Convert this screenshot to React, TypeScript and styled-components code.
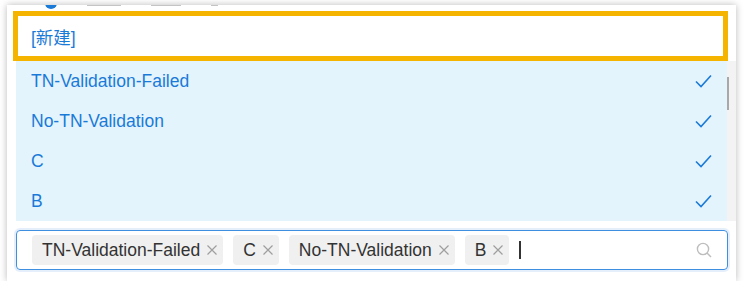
import React from 'react';
import styled, { createGlobalStyle } from 'styled-components';

const GlobalStyle = createGlobalStyle`
  html, body {
    margin: 0;
    padding: 0;
    background: #ffffff;
    font-family: "Liberation Sans", Arial, "Noto Sans CJK SC", sans-serif;
  }
`;

const Panel = styled.div`
  position: relative;
  margin: 5px 8px 0 7px;
  height: 276px;
  background: #fff;
  box-shadow: 0 0 7px rgba(0, 0, 0, 0.28);
  display: flex;
  flex-direction: column;
`;

const ClippedRow = styled.div`
  height: 6px;
  overflow: hidden;
  display: flex;
  align-items: flex-end;
  padding-left: 38px;
`;

const ClippedInner = styled.div`
  display: flex;
  align-items: center;
  gap: 30px;
  margin-bottom: -1px;
`;

const Dot = styled.span`
  width: 12px;
  height: 12px;
  margin-bottom: 3px;
  border-radius: 50%;
  background: #1a7ad8;
`;

const Ghost = styled.span<{ $w: number }>`
  width: ${p => p.$w}px;
  height: 3px;
  background: #c4c4c4;
`;

const NewEntry = styled.div`
  margin: 0 8px 0 6px;
  height: 50px;
  box-sizing: border-box;
  border: 5px solid #f5b400;
  background: #fff;
  display: flex;
  align-items: center;
  padding-left: 13px;
  font-size: 17.5px;
  color: #1a7ad8;
`;

const ListWrap = styled.div`
  position: relative;
  display: flex;
  margin-left: 9px;
`;

const List = styled.div`
  flex: 1;
  background: #e3f4fd;
`;

const Track = styled.div`
  position: relative;
  width: 9px;
  background: #f3f3f3;
`;

const Thumb = styled.div`
  position: absolute;
  left: 0;
  top: 16px;
  width: 2px;
  height: 33px;
  background: #a8a8a8;
`;

const Option = styled.div`
  height: 40px;
  display: flex;
  align-items: center;
  justify-content: space-between;
  padding: 0 15px;
  font-size: 17.5px;
  color: #1a7ad8;
`;

const Input = styled.div`
  margin: 9px 8px 0 9px;
  height: 40px;
  box-sizing: border-box;
  border: 1px solid #3f8fe0;
  border-radius: 4px;
  box-shadow: 0 0 0 2px rgba(63, 143, 224, 0.14);
  display: flex;
  align-items: center;
  padding: 0 15px 0 15px;
  gap: 10px;
`;

const Tag = styled.span`
  height: 30px;
  display: inline-flex;
  align-items: center;
  gap: 7px;
  padding: 0 6px 0 10px;
  border-radius: 4px;
  background: #f0f0f0;
  color: #333;
  font-size: 17.5px;
`;

const Caret = styled.span`
  width: 2px;
  height: 18px;
  background: #333;
`;

const Spacer = styled.span`
  flex: 1;
`;

const Check = () => (
  <svg width="17" height="14" viewBox="0 0 17 14" fill="none">
    <path d="M1 7.5 L6 12.5 L16 1.5" stroke="#1a7ad8" strokeWidth="1.6" />
  </svg>
);

const CloseIcon = () => (
  <svg width="10" height="10" viewBox="0 0 10 10" fill="none">
    <path d="M0.5 0.5 L9.5 9.5 M9.5 0.5 L0.5 9.5" stroke="#9e9e9e" strokeWidth="1.2" />
  </svg>
);

const Search = () => (
  <svg width="16" height="16" viewBox="0 0 16 16" fill="none">
    <circle cx="7" cy="7" r="5.6" stroke="#bdbdbd" strokeWidth="1.4" />
    <path d="M11 11 L15 15" stroke="#bdbdbd" strokeWidth="1.4" />
  </svg>
);

const options = ['TN-Validation-Failed', 'No-TN-Validation', 'C', 'B'];
const tags = ['TN-Validation-Failed', 'C', 'No-TN-Validation', 'B'];

export default function App() {
  return (
    <>
      <GlobalStyle />
      <Panel>
        <ClippedRow>
          <ClippedInner>
            <Dot />
            <Ghost $w={34} />
            <Ghost $w={30} />
            <Ghost $w={7} />
          </ClippedInner>
        </ClippedRow>
        <NewEntry>[新建]</NewEntry>
        <ListWrap>
          <List>
            {options.map(o => (
              <Option key={o}>
                <span>{o}</span>
                <Check />
              </Option>
            ))}
          </List>
          <Track>
            <Thumb />
          </Track>
        </ListWrap>
        <Input>
          {tags.map(t => (
            <Tag key={t}>
              {t}
              <CloseIcon />
            </Tag>
          ))}
          <Caret />
          <Spacer />
          <Search />
        </Input>
      </Panel>
    </>
  );
}
